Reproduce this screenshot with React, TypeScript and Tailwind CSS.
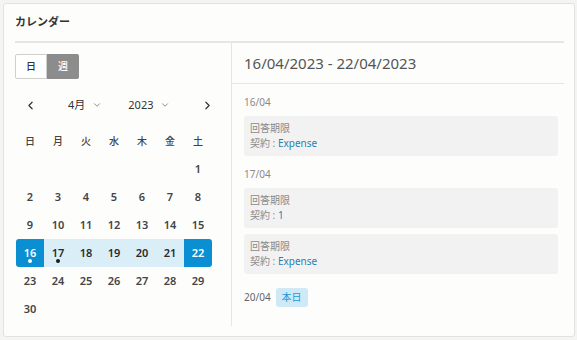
import { ChevronLeft, ChevronRight, ChevronDown } from 'lucide-react';

const font = { fontFamily: '"Noto Sans", "Noto Sans CJK JP", sans-serif' };

const weeks: (number | null)[][] = [
  [null, null, null, null, null, null, 1],
  [2, 3, 4, 5, 6, 7, 8],
  [9, 10, 11, 12, 13, 14, 15],
  [16, 17, 18, 19, 20, 21, 22],
  [23, 24, 25, 26, 27, 28, 29],
  [30, null, null, null, null, null, null],
];

const dayNames = ['日', '月', '火', '水', '木', '金', '土'];

function DayCell({ d }: { d: number | null }) {
  if (d === null) return <div className="h-[28px]" />;
  const edge = d === 16 || d === 22;
  const inRange = d >= 16 && d <= 22;
  let cls = 'text-[#444]';
  if (edge) cls = 'bg-[#0a8fd3] text-white';
  else if (inRange) cls = 'bg-[#daeef8] text-[#2a2a2a]';
  const round = d === 16 ? 'rounded-l-[3px]' : d === 22 ? 'rounded-r-[3px]' : '';
  return (
    <div className={`relative flex h-[28px] items-center justify-center text-[11px] font-semibold ${cls} ${round}`}>
      {d}
      {d === 16 && <span className="absolute bottom-[4px] h-[4px] w-[4px] rounded-full bg-white" />}
      {d === 17 && <span className="absolute bottom-[4px] h-[4px] w-[4px] rounded-full bg-[#1a1a1a]" />}
    </div>
  );
}

function EventCard({ value }: { value: string }) {
  return (
    <div className="flex h-[40px] flex-col justify-center rounded-[3px] bg-[#f2f2f2] px-[6px] text-[10px] leading-[15px]">
      <div className="text-[#8a8a8a]">回答期限</div>
      <div className="text-[#8a8a8a]">
        契約 : <span className="text-[#2d7fb0]">{value}</span>
      </div>
    </div>
  );
}

export default function App() {
  return (
    <div className="h-[340px] w-[577px] bg-[#f4f4f3] p-[3px]" style={font}>
      <div className="flex h-[334px] w-[572px] flex-col rounded-[3px] border border-[#e2e2e2] bg-[#fdfdfc] pl-[11px] pr-[10px]">
        <div className="flex h-[39px] items-center border-b-2 border-[#e6e6e6] text-[11px] font-bold text-[#333]">
          カレンダー
        </div>
        <div className="flex flex-1">
          {/* left: calendar */}
          <div className="w-[217px] border-r border-[#e6e6e6] pt-[11px]">
            <div className="flex h-[25px] w-[64px] text-[10px] font-medium">
              <div className="flex w-[32px] items-center justify-center rounded-l-[2px] border border-[#cfcfcf] bg-white text-[#333]">
                日
              </div>
              <div className="flex w-[32px] items-center justify-center rounded-r-[2px] bg-[#8c8c8c] text-white">
                週
              </div>
            </div>
            <div className="mt-[15px] flex h-[22px] items-center text-[11px] text-[#333]">
              <ChevronLeft className="ml-[9px] h-[13px] w-[13px]" strokeWidth={2.2} />
              <div className="ml-[31px] flex items-center gap-[7px]">
                4月 <ChevronDown className="h-[10px] w-[10px] text-[#777]" strokeWidth={2} />
              </div>
              <div className="ml-[26px] flex items-center gap-[7px]">
                2023 <ChevronDown className="h-[10px] w-[10px] text-[#777]" strokeWidth={2} />
              </div>
              <ChevronRight className="ml-[31px] h-[13px] w-[13px]" strokeWidth={2.2} />
            </div>
            <div className="ml-[1px] mt-[11px] grid w-[196px] grid-cols-7">
              {dayNames.map((n) => (
                <div key={n} className="flex h-[28px] items-center justify-center text-[10px] font-medium text-[#444]">
                  {n}
                </div>
              ))}
              {weeks.flat().map((d, i) => (
                <DayCell key={i} d={d} />
              ))}
            </div>
          </div>
          {/* right: list */}
          <div className="flex-1">
            <div className="flex h-[41px] items-center border-b border-[#e6e6e6] pl-[12px] text-[15px] text-[#555]">
              16/04/2023 - 22/04/2023
            </div>
            <div className="pl-[12px] pr-[6px] text-[10px]">
              <div className="mb-[6px] mt-[11px] text-[#8a8a8a]">16/04</div>
              <EventCard value="Expense" />
              <div className="mb-[6px] mt-[11px] text-[#8a8a8a]">17/04</div>
              <EventCard value="1" />
              <div className="mt-[6px]">
                <EventCard value="Expense" />
              </div>
              <div className="mt-[14px] flex items-center gap-[5px] text-[#666]">
                20/04
                <span className="rounded-[3px] bg-[#cfe9f6] px-[6px] py-[2px] text-[#1a9ad6]">本日</span>
              </div>
            </div>
          </div>
        </div>
        <div className="h-[10px]" />
      </div>
    </div>
  );
}
